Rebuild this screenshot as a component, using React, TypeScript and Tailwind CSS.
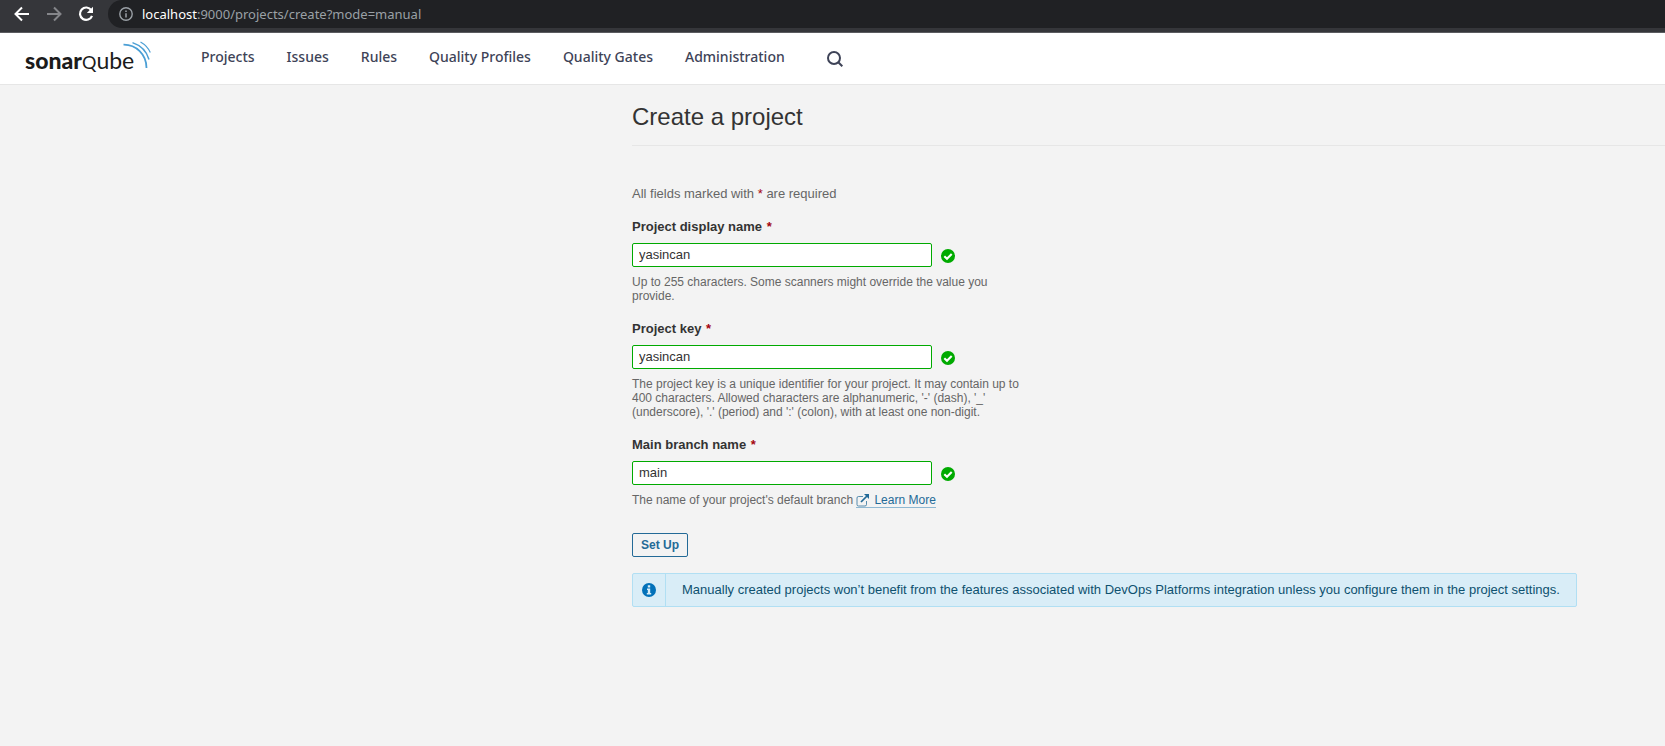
import { useState } from "react";
import type { ReactNode } from "react";

const navItems = ["Projects", "Issues", "Rules", "Quality Profiles", "Quality Gates", "Administration"];

function BrowserBar() {
  return (
    <div className="flex h-[33px] items-start border-b border-[#5b5c60] bg-[#35363a] pl-3.5 font-['Noto_Sans',sans-serif]">
      <div className="flex h-7 items-center gap-4">
        <button type="button" aria-label="Back" className="block">
          <svg width="16" height="16" viewBox="0 0 16 16" fill="none" stroke="#fff" strokeWidth="2">
            <path d="M15 8H2.5M8 1.5L1.5 8L8 14.5" />
          </svg>
        </button>
        <button type="button" aria-label="Forward" className="block">
          <svg width="16" height="16" viewBox="0 0 16 16" fill="none" stroke="#85868a" strokeWidth="2">
            <path d="M1 8H13.5M8 1.5L14.5 8L8 14.5" />
          </svg>
        </button>
        <button type="button" aria-label="Reload" className="block">
          <svg width="16" height="16" viewBox="0 0 16 16">
            <path d="M13.3 4.2A6.2 6.2 0 1 0 14 9.8" fill="none" stroke="#fff" strokeWidth="2.2" />
            <path d="M15 0.8V7H8.8Z" fill="#fff" />
          </svg>
        </button>
      </div>
      <div className="ml-3.5 flex h-7 flex-1 items-center gap-[9px] rounded-bl-[14px] rounded-tl-[14px] bg-[#202124] pl-[11px] text-[13px] text-[#9aa0a6]">
        <svg width="14" height="14" viewBox="0 0 14 14" fill="none" stroke="#9aa0a6">
          <circle cx="7" cy="7" r="6.2" strokeWidth="1.4" />
          <path d="M7 6.2V10.4M7 3.4V5" strokeWidth="1.5" />
        </svg>
        <span className="pt-0.5">
          <span className="text-white">localhost</span>:9000/projects/create?mode=manual
        </span>
      </div>
    </div>
  );
}

function Logo() {
  return (
    <a href="#" className="flex h-full w-[126px] text-[#1b1b1b]">
      <span className="flex w-[107px] shrink-0 items-baseline pt-3 font-['Lato',sans-serif] text-[23px] leading-[30px]">
        <span className="font-black">sonar</span>
        <span className="text-[18px]">Q</span>
        <span>ube</span>
      </span>
      <svg className="-ml-[9px] mt-2 shrink-0" width="28" height="28" viewBox="0 0 28 28" fill="none" stroke="#4b9fd5">
        <path d="M0.5 3.7C13 3.5 23.5 13.5 23.5 27" strokeWidth="1.8" />
        <path d="M9.5 1.6C17.5 4.3 23.8 10.5 26 18.5" strokeWidth="1.5" />
        <path d="M17.5 1C22 3.5 25.3 7 27.3 11.5" strokeWidth="1.2" />
      </svg>
    </a>
  );
}

function Header() {
  return (
    <header className="flex h-[52px] items-center border-b border-[#e6e6e6] bg-white pl-[25px]">
      <Logo />
      <nav className="ml-[50px] flex gap-8 pb-1 font-['Noto_Sans',sans-serif] text-sm font-medium text-[#3e4357]">
        {navItems.map((item) => (
          <a key={item} href="#">
            {item}
          </a>
        ))}
      </nav>
      <button type="button" aria-label="Search" className="ml-[42px]">
        <svg width="16" height="16" viewBox="0 0 16 16" fill="none" stroke="#3e4357" strokeWidth="2">
          <circle cx="7" cy="7" r="6" />
          <path d="M11.3 11.3L15.3 15.3" />
        </svg>
      </button>
    </header>
  );
}

function ValidIcon() {
  return (
    <svg width="14" height="14" viewBox="0 0 14 14" className="mt-0.5">
      <circle cx="7" cy="7" r="7" fill="#00aa00" />
      <path d="M3.3 7.2L6 9.8L10.7 5" fill="none" stroke="#fff" strokeWidth="2.1" />
    </svg>
  );
}

function Field({ id, label, initial, children }: { id: string; label: string; initial: string; children: ReactNode }) {
  const [value, setValue] = useState(initial);
  return (
    <div>
      <label htmlFor={id} className="block text-[13px] font-bold leading-4 text-[#333]">
        {label} <span className="ml-px text-[#a4030f]">*</span>
      </label>
      <div className="mt-2 flex items-center gap-[9px]">
        <input
          id={id}
          value={value}
          onChange={(e) => setValue(e.target.value)}
          className="h-6 w-[300px] rounded-xs border border-[#00aa00] bg-white px-1.5 pb-0.5 text-[13px] text-[#333] outline-none"
        />
        <ValidIcon />
      </div>
      <p className="mt-2 w-[390px] text-xs leading-[14px] text-[#666]">{children}</p>
    </div>
  );
}

export default function App() {
  return (
    <div className="min-h-screen bg-[#f3f3f3] font-['Liberation_Sans',sans-serif]">
      <BrowserBar />
      <Header />
      <main className="pl-[632px]">
        <div className="border-b border-[#e6e6e6] pb-3.5 pt-[18px]">
          <h1 className="text-2xl leading-7 text-[#333]">Create a project</h1>
        </div>
        <form onSubmit={(e) => e.preventDefault()} className="pt-10">
          <p className="text-[13px] leading-4 text-[#666]">
            All fields marked with <span className="text-[#a4030f]">*</span> are required
          </p>
          <div className="mt-[17px] flex flex-col gap-[18px]">
            <Field id="project-name" label="Project display name" initial="yasincan">
              Up to 255 characters. Some scanners might override the value you provide.
            </Field>
            <Field id="project-key" label="Project key" initial="yasincan">
              The project key is a unique identifier for your project. It may contain up to 400 characters. Allowed
              characters are alphanumeric, '-' (dash), '_' (underscore), '.' (period) and ':' (colon), with at least one
              non-digit.
            </Field>
            <Field id="main-branch" label="Main branch name" initial="main">
              The name of your project's default branch{" "}
              <a href="#" className="border-b border-[#8fb8d2] text-[#236a97]">
                <svg
                  width="14"
                  height="14"
                  viewBox="0 0 14 14"
                  fill="none"
                  stroke="#236a97"
                  className="mr-1 inline-block align-text-top"
                >
                  <path d="M7 3.5H2.5Q1 3.5 1 5V11.5Q1 13 2.5 13H9Q10.5 13 10.5 11.5V8" strokeOpacity="0.75" />
                  <path d="M5 9L11 3" strokeWidth="1.7" />
                  <path d="M8 1H13V6Z" fill="#236a97" stroke="none" />
                </svg>
                Learn More
              </a>
            </Field>
          </div>
          <button
            type="submit"
            className="mt-[26px] block h-6 rounded-xs border border-[#236a97] px-2 text-xs font-bold text-[#236a97]"
          >
            Set Up
          </button>
        </form>
        <div
          role="status"
          className="mt-4 inline-flex h-[34px] items-stretch rounded-xs border border-[#b1dff3] bg-[#d9edf7] text-[13px] text-[#0e516f]"
        >
          <div className="flex w-[33px] items-center justify-center border-r border-[#b1dff3]">
            <svg width="14" height="14" viewBox="0 0 14 14">
              <circle cx="7" cy="7" r="7" fill="#0271b9" />
              <path d="M5.8 2.2H8.2V4.4H5.8ZM5 5.6H8.2V10H9.2V11.5H4.8V10H5.8V7H5Z" fill="#d9edf7" />
            </svg>
          </div>
          <p className="flex items-center px-4">
            Manually created projects won’t benefit from the features associated with DevOps Platforms integration
            unless you configure them in the project settings.
          </p>
        </div>
      </main>
    </div>
  );
}
